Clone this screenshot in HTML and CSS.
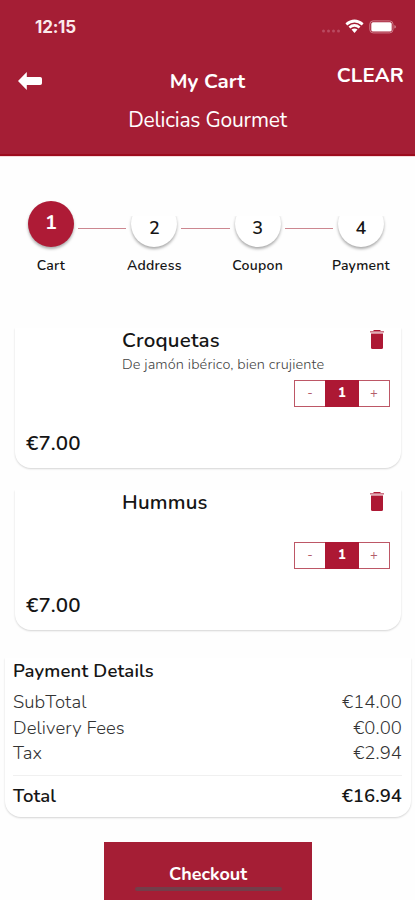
FILE: index.html
```html
<!DOCTYPE html>
<html lang="en">
<head>
<meta charset="utf-8">
<title>My Cart</title>
<link rel="stylesheet" href="styles.css">
</head>
<body>
<div class="screen">
  <header class="header">
    <div class="status">
      <span class="time">12:15</span>
      <svg class="status-icons" width="76" height="18" viewBox="0 0 76 18">
        <g fill="#b94a60"><circle cx="2.500" cy="13" r="1.500"/><circle cx="7.500" cy="13" r="1.500"/><circle cx="12.500" cy="13" r="1.500"/><circle cx="17.500" cy="13" r="1.500"/></g>
        <g fill="none" stroke="#fff" stroke-width="2.700"><path d="M25.300 6.400Q33.500-.4 41.700 6.400"/><path d="M28.400 9.500Q33.500 5.400 38.600 9.500"/></g>
        <path d="M30.500 11.600Q33.500 9.400 36.500 11.600L33.500 15Z" fill="#fff"/>
        <rect x="48.800" y="2.900" width="23.200" height="12" rx="3.300" fill="none" stroke="#cf7b89"/>
        <rect x="50.300" y="4.200" width="20.400" height="9.400" rx="1.700" fill="#fff"/>
        <path d="M73.300 7Q75 7.400 75 8.800T73.300 10.600Z" fill="#cf7b89"/>
      </svg>
    </div>
    <div class="nav">
      <svg class="back" width="25" height="18" viewBox="0 0 25 18"><path d="M0 9L8.800 0V4.900H22.200Q24 4.900 24 6.700V11.300Q24 13.100 22.200 13.100H8.800V18Z" fill="#fff"/></svg>
      <h1 class="title">My Cart</h1>
      <span class="clear">CLEAR</span>
    </div>
    <p class="restaurant">Delicias Gourmet</p>
  </header>

  <nav class="steps">
    <div class="step active"><span class="dot">1</span><span class="label">Cart</span></div>
    <i class="line"></i>
    <div class="step"><span class="dot">2</span><span class="label">Address</span></div>
    <i class="line"></i>
    <div class="step"><span class="dot">3</span><span class="label">Coupon</span></div>
    <i class="line"></i>
    <div class="step"><span class="dot">4</span><span class="label">Payment</span></div>
  </nav>

  <section class="item">
    <div class="item-top">
      <h2 class="name">Croquetas</h2>
      <svg class="trash" width="16" height="20" viewBox="0 0 16 20"><path d="M4.500 0H11.500V1H4.500Z"/><path d="M1 1H15V2.600H1Z" opacity=".6"/><path d="M2 3.500H14V17.500Q14 19 12.500 19H3.500Q2 19 2 17.500Z"/></svg>
    </div>
    <p class="desc">De jamón ibérico, bien crujiente</p>
    <div class="qty"><span>-</span><b>1</b><span>+</span></div>
    <p class="price">€7.00</p>
  </section>

  <section class="item second">
    <div class="item-top">
      <h2 class="name">Hummus</h2>
      <svg class="trash" width="16" height="20" viewBox="0 0 16 20"><path d="M4.500 0H11.500V1H4.500Z"/><path d="M1 1H15V2.600H1Z" opacity=".6"/><path d="M2 3.500H14V17.500Q14 19 12.500 19H3.500Q2 19 2 17.500Z"/></svg>
    </div>
    <p class="desc"></p>
    <div class="qty"><span>-</span><b>1</b><span>+</span></div>
    <p class="price">€7.00</p>
  </section>

  <section class="details">
    <h2 class="details-title">Payment Details</h2>
    <div class="row"><span>SubTotal</span><span class="amount">€14.00</span></div>
    <div class="row"><span>Delivery Fees</span><span class="amount">€0.00</span></div>
    <div class="row"><span>Tax</span><span class="amount">€2.94</span></div>
    <div class="row total"><span>Total</span><span class="amount">€16.94</span></div>
  </section>

  <div class="checkout"><span>Checkout</span><i class="home"></i></div>
</div>
</body>
</html>
```
FILE: styles.css
```css
* { box-sizing: border-box; margin: 0; padding: 0; }
body { background: #fff; font-family: Nunito, Lato, sans-serif; color: #151515; }
.screen { width: 415px; height: 900px; overflow: hidden; display: flex; flex-direction: column; background: #fefefe; }
.header { height: 156px; flex: none; background: #a51e35; border-bottom: 2px solid #9c0b1d; color: #fff; box-shadow: 0 1px 0 #f6d9dc; }
.status { height: 54px; padding: 18px 18px 0 35px; display: flex; justify-content: space-between; }
.time { font: 700 17px/18px Inter, sans-serif; letter-spacing: -.2px; color: #fbeaec; }
.nav { height: 50px; display: grid; grid-template-columns: 100px 1fr 100px; padding: 0 11px 0 18px; }
.back { margin-top: 18px; }
.title { font-size: 20.500px; line-height: 24px; font-weight: 700; margin-top: 15px; text-align: center; letter-spacing: 0; padding-right: 7px; }
.clear { font-size: 20.500px; line-height: 24px; font-weight: 700; margin-top: 9px; text-align: right; letter-spacing: .1px; }
.restaurant { font-size: 21px; line-height: 24px; text-align: center; margin-top: 4px; letter-spacing: -.2px; }

.steps { height: 172px; flex: none; padding: 45px 25px 0 22px; display: flex; }
.step { width: 58px; display: flex; flex-direction: column; align-items: center; }
.line { height: 1px; flex: 1; background: #cc8790; margin: 27px -1px 0 -2px; }
.dot { width: 46px; height: 46px; border-radius: 50%; background: #fff; display: flex; justify-content: center; padding-top: 16px; font-size: 18px; line-height: 22px; font-weight: 600; box-shadow: 0 2px 3px #aaa; clip-path: inset(15px -8px -8px); }
.active .dot { background: #ae1b36; color: #fff; font-size: 20px; font-weight: 700; padding-top: 11px; clip-path: none; }
.label { font-size: 14px; line-height: 16px; font-weight: 600; margin-top: 11px; letter-spacing: .25px; }

.item { width: 386px; height: 140px; flex: none; margin-left: 15px; padding: 0 11px; background: #fff; border-radius: 0 0 16px 16px; box-shadow: 0 1px 2px #d4d4d4; clip-path: inset(0 -5px -5px); }
.second { margin-top: 22px; }
.item-top { height: 26px; padding: 0 5px 0 96px; display: flex; justify-content: space-between; }
.name { font-size: 20.500px; line-height: 24px; font-weight: 600; letter-spacing: .2px; }
.trash { margin-top: 2px; fill: #ad1834; }
.desc { height: 26px; padding: 0 0 0 96px; font-size: 14.500px; line-height: 20px; color: #444; font-weight: 300; letter-spacing: .12px; white-space: nowrap; }
.qty { width: 96px; height: 27px; margin-left: 268px; border: 1px solid #bd5766; display: grid; grid-template-columns: 30px 34px 1fr; text-align: center; font-size: 13px; line-height: 25px; color: #b35d6b; }
.qty b { background: #ad1834; color: #fff; margin: -1px 0; line-height: 27px; font-weight: 800; }
.price { font-size: 20.500px; line-height: 24px; margin-top: 24px; font-weight: 600; letter-spacing: .1px; }

.details { width: 406px; height: 159px; flex: none; margin: 28px 0 0 5px; padding: 2px 9px 0 8px; border-radius: 0 0 16px 16px; box-shadow: 0 1px 2px #d4d4d4; background: #fff; clip-path: inset(0 -5px -5px); }
.details-title { font-size: 18.500px; line-height: 22px; font-weight: 600; letter-spacing: .15px; margin-bottom: 8px; }
.row { height: 25.600px; font-size: 18.500px; line-height: 24px; color: #333; font-weight: 300; display: flex; justify-content: space-between; letter-spacing: .08px; }
.total { height: 42px; margin-top: 8px; padding-top: 8px; border-top: 1px solid #f0f0f0; color: #151515; font-weight: 600; }
.checkout { width: 208px; height: 58px; flex: none; margin: 25px 0 0 104px; padding-top: 20px; background: #a51e35; color: #fff; display: flex; flex-direction: column; align-items: center; font-size: 18px; line-height: 24px; font-weight: 700; }
.home { width: 147px; height: 4px; border-radius: 3px; background: #733e4a; margin-top: 1px; }
```
